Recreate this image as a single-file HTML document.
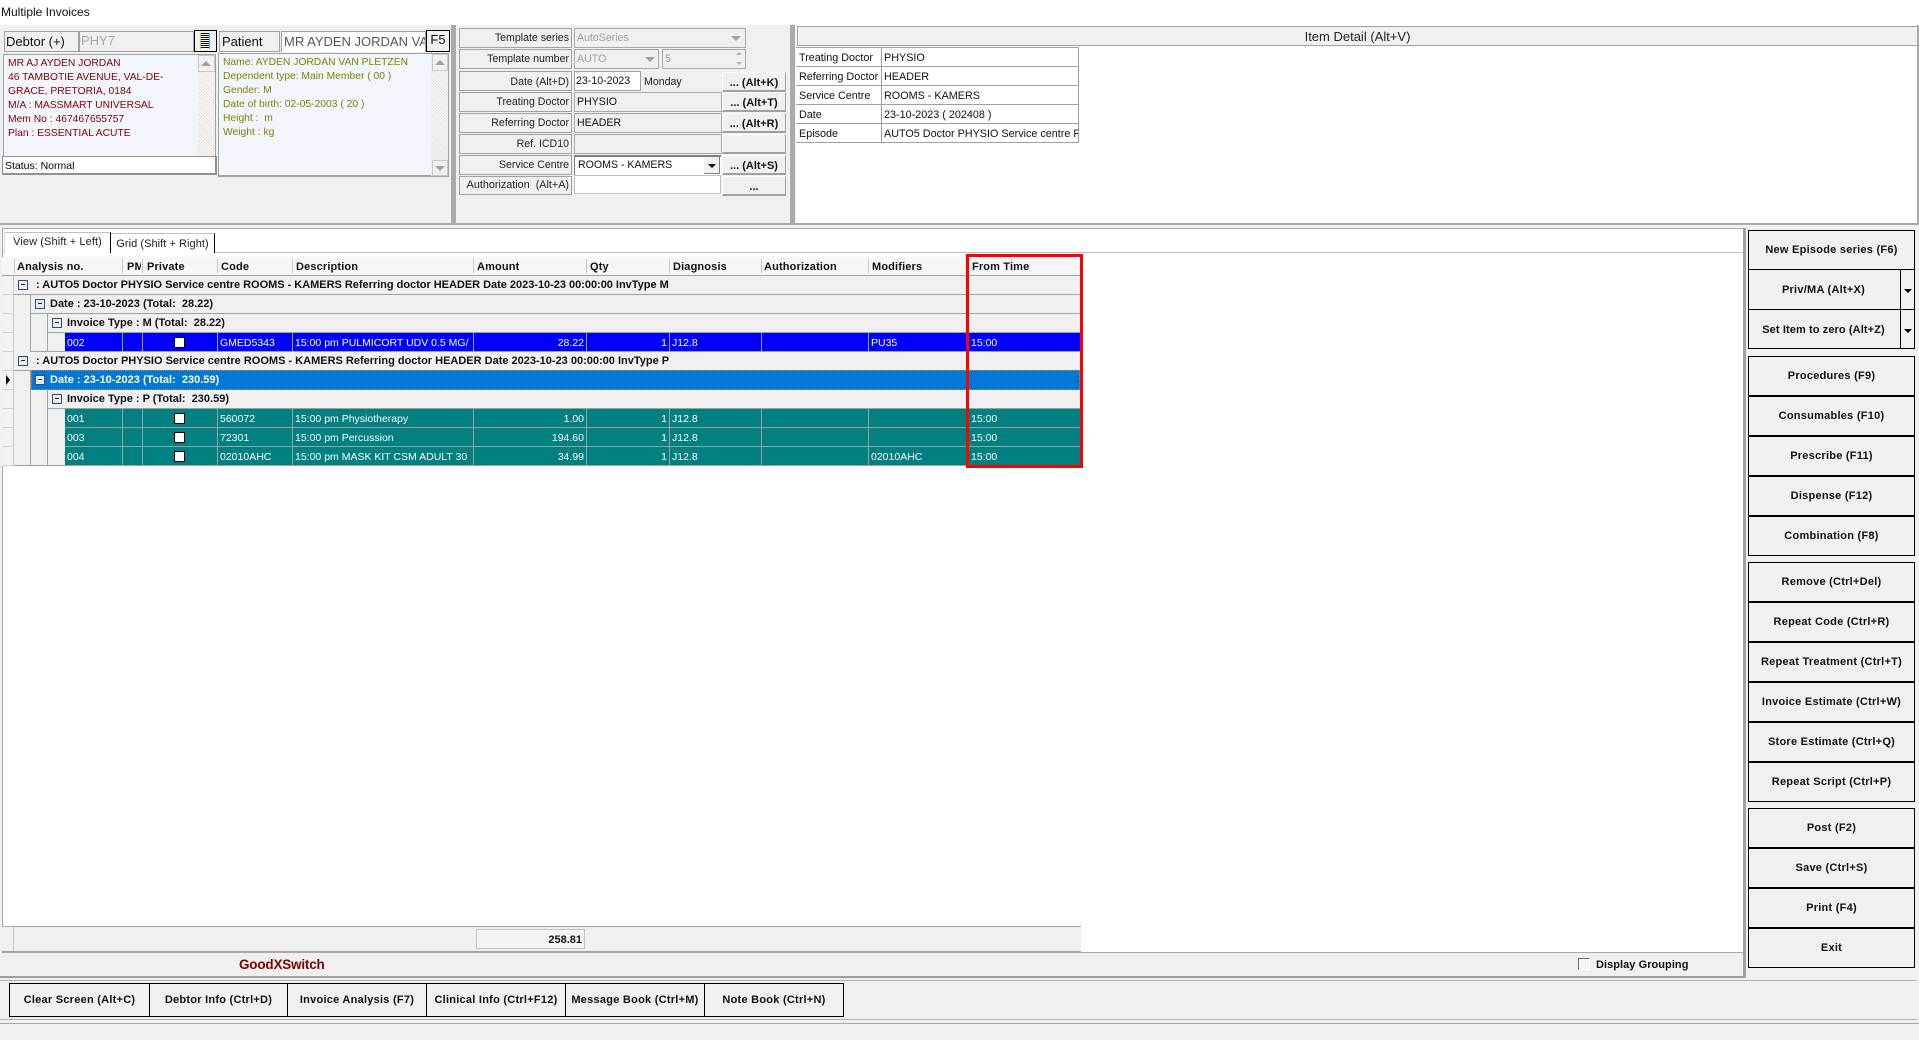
<!DOCTYPE html>
<html><head><meta charset="utf-8"><title>Multiple Invoices</title>
<style>
html,body{margin:0;padding:0;background:#fff}
#p{position:relative;width:1919px;height:1040px;overflow:hidden;background:#fff;font:10.6px "Liberation Sans",Arial,sans-serif;color:#000}
#p div{position:absolute;box-sizing:border-box;white-space:nowrap;overflow:hidden}
.lb{background:#f0f0f0;border:1px solid #a0a0a0;text-align:right;padding-right:2px;line-height:19px;color:#222}
.fd{background:#f0f0f0;border:1px solid #a8a8a8;padding-left:2px;line-height:19px;color:#111}
.dis{color:#a0a0a0}
.bt{background:#f0f0f0;border-top:1px solid #fff;border-left:1px solid #fff;border-right:1px solid #a0a0a0;border-bottom:2px solid #a0a0a0;text-align:center;font-weight:bold;font-size:11px;line-height:20px;color:#111}
.t{line-height:14px;font-size:10.3px}
.c{height:19px;line-height:20px;border-right:1px solid #a0a0a0;border-bottom:1px solid #a0a0a0;color:#fff;padding-left:2px;font-size:10.5px}
.r{text-align:right;padding:0 2px 0 0}
.h{top:257px;height:18px;line-height:20px;font-weight:bold;font-size:11px;letter-spacing:.15px;color:#111}
.hs{top:259px;width:1px;height:14px;background:#c8c8c8}
.g{height:19px;background:#f0f0f0;border-bottom:1px solid #a0a0a0;font-weight:bold;font-size:11px;line-height:19px;color:#111}
.i{left:2px;width:12px;height:19px;background:#f2f2f2;border-bottom:1px solid #d0d0d0;border-right:1px solid #c8c8c8}
.x{width:10px;height:10px;background:#e8edf5;border:1px solid #3b4a68}
.x::after{content:"";position:absolute;left:2px;top:3px;width:4px;height:1px;background:#1b2a48}
.cb{left:174px;width:11px;height:11px;background:#fff;border:1px solid #000}
.b{left:1748px;width:167px;height:40px;background:#f0f0f0;border:1px solid #000;text-align:center;font-weight:bold;font-size:11px;letter-spacing:.25px;line-height:38px;color:#111}
.b2{top:983px;height:34px;background:#f0f0f0;border:1px solid #000;text-align:center;font-weight:bold;font-size:11px;letter-spacing:.25px;line-height:33px;color:#111}
.tri{width:0;height:0;border-left:4px solid transparent;border-right:4px solid transparent;border-top:4px solid #000}
.up{width:0;height:0;border-left:5px solid transparent;border-right:5px solid transparent;border-bottom:5px solid #a0a0a0}
.dn{width:0;height:0;border-left:5px solid transparent;border-right:5px solid transparent;border-top:5px solid #a0a0a0}
.sb{background:#f0f0f0;border:1px solid #c8c8c8}
.trk{background-color:#f4f4f4;background-image:repeating-linear-gradient(45deg,#e4e4e4 0 1px,#fafafa 1px 2px)}
.dt{border-right:1px solid #a0a0a0;border-bottom:1px solid #a0a0a0;line-height:20px;padding-left:2px;background:#fff;color:#111;font-size:10.8px}
</style></head><body><div id="p">
<div style="left:1px;top:5px;font-size:12px;line-height:15px;color:#111">Multiple Invoices</div>

<!-- top panels -->
<div style="left:0;top:25px;width:1919px;height:198px;background:#f0f0f0"></div>
<div style="left:451px;top:25px;width:5px;height:198px;background:#aaa"></div>
<div style="left:790px;top:25px;width:5px;height:198px;background:#aaa"></div>
<div style="left:796px;top:25px;width:1123px;height:198px;background:#fff"></div>
<div style="left:0;top:223px;width:1919px;height:2px;background:#aaa"></div>
<div style="left:1917px;top:25px;width:2px;height:198px;background:#aaa"></div>

<!-- debtor / patient -->
<div style="left:4px;top:31px;width:75px;height:21px;border:1px solid #a0a0a0;background:#f0f0f0;font-size:13px;line-height:20px;padding-left:1px;color:#111">Debtor (+)</div>
<div style="left:79px;top:31px;width:115px;height:21px;border:1px solid #a0a0a0;background:#f0f0f0;font-size:13px;line-height:17px;padding-left:1px;color:#a8a8a8">PHY7</div>
<div style="left:194px;top:30px;width:23px;height:22px;border:1px solid #000;background:#f0f0f0"></div>
<div style="left:200px;top:33px;width:10px;height:16px;background:repeating-linear-gradient(#111 0 1px,#fff 1px 2px);border-left:1px solid #e8b060;border-right:1px solid #60a8e8"></div>
<div style="left:219px;top:31px;width:61px;height:21px;border:1px solid #a0a0a0;background:#f0f0f0;font-size:13px;line-height:20px;padding-left:2px;color:#111">Patient</div>
<div style="left:281px;top:31px;width:145px;height:21px;border:1px solid #a0a0a0;border-bottom:0;background:#fff;font-size:13px;line-height:20px;padding-left:2px;color:#555">MR AYDEN JORDAN VAN</div>
<div style="left:426px;top:30px;width:24px;height:22px;border:1px solid #000;background:#f0f0f0;font-size:13px;line-height:18px;text-align:center;color:#111">F5</div>

<div style="left:3px;top:54px;width:213px;height:103px;background:#f2f6fc;border:1px solid #a0a0a0"></div>
<div class="trk" style="left:198px;top:55px;width:17px;height:101px"></div>
<div class="sb" style="left:198px;top:55px;width:17px;height:17px"></div>
<div class="up" style="left:201px;top:61px"></div>
<div class="t" style="left:8px;top:57px;color:#800000">MR AJ AYDEN JORDAN</div>
<div class="t" style="left:8px;top:71px;color:#800000">46 TAMBOTIE AVENUE, VAL-DE-</div>
<div class="t" style="left:8px;top:85px;color:#800000">GRACE, PRETORIA, 0184</div>
<div class="t" style="left:8px;top:99px;color:#800000">M/A : MASSMART UNIVERSAL</div>
<div class="t" style="left:8px;top:113px;color:#800000">Mem No : 467467655757</div>
<div class="t" style="left:8px;top:127px;color:#800000">Plan : ESSENTIAL ACUTE</div>
<div style="left:2px;top:156px;width:215px;height:19px;background:#fff;border:1px solid #909090;border-width:1px 2px 2px 1px;line-height:19px;font-size:10.5px;padding-left:2px;color:#000">Status: Normal</div>

<div style="left:218px;top:53px;width:231px;height:124px;background:#f2f6fc;border:1px solid #a0a0a0;border-right-width:2px;border-bottom-width:2px"></div>
<div class="trk" style="left:431px;top:54px;width:17px;height:122px"></div>
<div class="sb" style="left:432px;top:54px;width:16px;height:17px"></div>
<div class="up" style="left:435px;top:60px"></div>
<div class="sb" style="left:432px;top:160px;width:16px;height:16px"></div>
<div class="dn" style="left:435px;top:166px"></div>
<div class="t" style="left:223px;top:56px;color:#808000">Name: AYDEN JORDAN VAN PLETZEN</div>
<div class="t" style="left:223px;top:70px;color:#808000">Dependent type: Main Member ( 00 )</div>
<div class="t" style="left:223px;top:84px;color:#808000">Gender: M</div>
<div class="t" style="left:223px;top:98px;color:#808000">Date of birth: 02-05-2003 ( 20 )</div>
<div class="t" style="left:223px;top:112px;color:#808000">Height :&nbsp; m</div>
<div class="t" style="left:223px;top:126px;color:#808000">Weight : kg</div>

<!-- template form -->
<div class="lb" style="left:459px;top:28px;width:113px;height:20px">Template series</div>
<div class="fd dis" style="left:574px;top:28px;width:172px;height:20px;padding-left:2px">AutoSeries</div>
<div class="dn" style="left:731px;top:36px"></div>
<div class="lb" style="left:459px;top:49px;width:113px;height:20px">Template number</div>
<div class="fd dis" style="left:574px;top:49px;width:85px;height:20px">AUTO</div>
<div class="dn" style="left:645px;top:57px"></div>
<div class="fd dis" style="left:662px;top:49px;width:84px;height:20px">5</div>
<div style="left:736px;top:52px;width:0;height:0;border-left:3px solid transparent;border-right:3px solid transparent;border-bottom:3px solid #b0b0b0"></div>
<div style="left:736px;top:62px;width:0;height:0;border-left:3px solid transparent;border-right:3px solid transparent;border-top:3px solid #b0b0b0"></div>
<div class="lb" style="left:459px;top:71px;width:113px;height:20px;line-height:21px">Date (Alt+D)</div>
<div style="left:574px;top:71px;width:67px;height:20px;background:#fff;border:1px solid #a0a0a0;line-height:18px;padding-left:1px;color:#111">23-10-2023</div>
<div style="left:644px;top:71px;line-height:22px;color:#222">Monday</div>
<div class="lb" style="left:459px;top:92px;width:113px;height:20px">Treating Doctor</div>
<div class="fd" style="left:574px;top:92px;width:148px;height:20px;padding-left:2px;line-height:18px">PHYSIO</div>
<div class="lb" style="left:459px;top:113px;width:113px;height:20px">Referring Doctor</div>
<div class="fd" style="left:574px;top:113px;width:148px;height:20px;padding-left:2px;line-height:18px">HEADER</div>
<div class="lb" style="left:459px;top:134px;width:113px;height:20px">Ref. ICD10</div>
<div class="fd" style="left:574px;top:134px;width:148px;height:20px"></div>
<div class="lb" style="left:459px;top:155px;width:113px;height:20px">Service Centre</div>
<div style="left:574px;top:155px;width:147px;height:20px;background:#fff;border-top:2px solid #808080;border-left:1px solid #808080;line-height:17px;padding-left:3px;color:#111">ROOMS - KAMERS</div>
<div style="left:704px;top:157px;width:16px;height:17px;background:#f0f0f0;border-right:1px solid #808080;border-bottom:1px solid #808080"></div>
<div class="tri" style="left:708px;top:164px"></div>
<div class="lb" style="left:459px;top:176px;width:113px;height:19px;line-height:17px;font-size:10.8px">Authorization&nbsp; (Alt+A)</div>
<div style="left:574px;top:175px;width:147px;height:19px;background:#fff;border:1px solid #c0c0c0"></div>

<div class="bt" style="left:722px;top:72px;width:64px;height:20px">... (Alt+K)</div>
<div class="bt" style="left:722px;top:92px;width:64px;height:20px">... (Alt+T)</div>
<div class="bt" style="left:722px;top:113px;width:64px;height:20px">... (Alt+R)</div>
<div class="bt" style="left:722px;top:134px;width:64px;height:20px"></div>
<div class="bt" style="left:722px;top:155px;width:64px;height:20px">... (Alt+S)</div>
<div class="bt" style="left:722px;top:176px;width:64px;height:20px">...</div>

<!-- item detail -->
<div style="left:797px;top:26px;width:1120px;height:20px;background:#f0f0f0;border:1px solid #a0a0a0;border-width:1px 0 1px 1px;text-align:center;font-size:13px;line-height:20px;color:#222">Item Detail (Alt+V)</div>
<div style="left:796px;top:47px;width:283px;height:1px;background:#a0a0a0"></div>
<div class="dt" style="left:796px;top:48px;width:86px;height:19px;padding-left:3px">Treating Doctor</div>
<div class="dt" style="left:882px;top:48px;width:197px;height:19px">PHYSIO</div>
<div class="dt" style="left:796px;top:67px;width:86px;height:19px;padding-left:3px">Referring Doctor</div>
<div class="dt" style="left:882px;top:67px;width:197px;height:19px">HEADER</div>
<div class="dt" style="left:796px;top:86px;width:86px;height:19px;padding-left:3px">Service Centre</div>
<div class="dt" style="left:882px;top:86px;width:197px;height:19px">ROOMS - KAMERS</div>
<div class="dt" style="left:796px;top:105px;width:86px;height:19px;padding-left:3px">Date</div>
<div class="dt" style="left:882px;top:105px;width:197px;height:19px">23-10-2023 ( 202408 )</div>
<div class="dt" style="left:796px;top:124px;width:86px;height:19px;padding-left:3px">Episode</div>
<div class="dt" style="left:882px;top:124px;width:197px;height:19px">AUTO5 Doctor PHYSIO Service centre ROOMS</div>

<!-- main panel -->
<div style="left:0;top:225px;width:1919px;height:815px;background:#f0f0f0"></div>
<div style="left:2px;top:228px;width:1741px;height:724px;background:#fff;border-top:1px solid #a8a8a8;border-left:1px solid #a8a8a8"></div>
<div style="left:1743px;top:228px;width:3px;height:750px;background:#a0a0a0"></div>
<div style="left:3px;top:252px;width:1740px;height:1px;background:#c0c0c0"></div>
<div style="left:4px;top:232px;width:107px;height:21px;background:#fff;border-right:1px solid #000;border-top:1px solid #c0c0c0;border-left:1px solid #e0e0e0;text-align:center;font-size:11px;letter-spacing:.1px;line-height:19px;color:#222">View (Shift + Left)</div>
<div style="left:111px;top:233px;width:104px;height:20px;background:#fff;border-right:1px solid #000;border-top:1px solid #c0c0c0;text-align:center;font-size:11px;letter-spacing:.05px;line-height:21px;color:#222">Grid (Shift + Right)</div>

<!-- grid header -->
<div style="left:2px;top:257px;width:1078px;height:19px;background:#f6f6f6;border-bottom:1px solid #a0a0a0"></div>
<div class="hs" style="left:14px"></div><div class="hs" style="left:122px"></div><div class="hs" style="left:142px"></div><div class="hs" style="left:217px"></div><div class="hs" style="left:292px"></div><div class="hs" style="left:473px"></div><div class="hs" style="left:586px"></div><div class="hs" style="left:669px"></div><div class="hs" style="left:761px"></div><div class="hs" style="left:868px"></div>
<div class="h" style="left:17px">Analysis no.</div>
<div class="h" style="left:127px;width:14px">PM</div>
<div class="h" style="left:147px">Private</div>
<div class="h" style="left:221px">Code</div>
<div class="h" style="left:296px">Description</div>
<div class="h" style="left:477px">Amount</div>
<div class="h" style="left:590px">Qty</div>
<div class="h" style="left:673px">Diagnosis</div>
<div class="h" style="left:764px">Authorization</div>
<div class="h" style="left:872px">Modifiers</div>
<div class="h" style="left:972px">From Time</div>

<!-- indicators -->
<div class="i" style="top:276px"></div><div class="i" style="top:295px"></div><div class="i" style="top:314px"></div><div class="i" style="top:333px"></div><div class="i" style="top:352px"></div><div class="i" style="top:371px"></div><div class="i" style="top:390px"></div><div class="i" style="top:409px"></div><div class="i" style="top:428px"></div><div class="i" style="top:447px"></div>
<div style="left:6px;top:375px;width:0;height:0;border-top:5px solid transparent;border-bottom:5px solid transparent;border-left:4px solid #000"></div>

<!-- group rows -->
<div class="g" style="left:14px;top:276px;width:1066px;padding-left:22px;letter-spacing:-.02px">: AUTO5 Doctor PHYSIO Service centre ROOMS - KAMERS Referring doctor HEADER Date 2023-10-23 00:00:00 InvType M</div>
<div class="x" style="left:18px;top:280px"></div>
<div style="left:14px;top:295px;width:17px;height:57px;background:#f0f0f0;border-right:1px solid #a0a0a0"></div>
<div class="g" style="left:31px;top:295px;width:1049px;padding-left:19px">Date : 23-10-2023 (Total:&nbsp; 28.22)</div>
<div class="x" style="left:35px;top:299px"></div>
<div style="left:31px;top:314px;width:17px;height:38px;background:#f0f0f0;border-right:1px solid #a0a0a0;border-bottom:1px solid #a0a0a0"></div>
<div class="g" style="left:48px;top:314px;width:1032px;padding-left:19px">Invoice Type : M (Total:&nbsp; 28.22)</div>
<div class="x" style="left:52px;top:318px"></div>
<div style="left:48px;top:333px;width:17px;height:19px;background:#f0f0f0;border-bottom:1px solid #a0a0a0"></div>

<div class="c" style="left:65px;top:333px;width:58px;background:#00f">002</div>
<div class="c" style="left:123px;top:333px;width:20px;background:#00f"></div>
<div class="c" style="left:143px;top:333px;width:75px;background:#00f"></div>
<div class="cb" style="top:337px"></div>
<div class="c" style="left:218px;top:333px;width:75px;background:#00f">GMED5343</div>
<div class="c" style="left:293px;top:333px;width:181px;background:#00f">15:00 pm PULMICORT UDV 0.5 MG/</div>
<div class="c r" style="left:474px;top:333px;width:113px;background:#00f">28.22</div>
<div class="c r" style="left:587px;top:333px;width:83px;background:#00f">1</div>
<div class="c" style="left:670px;top:333px;width:92px;background:#00f">J12.8</div>
<div class="c" style="left:762px;top:333px;width:107px;background:#00f"></div>
<div class="c" style="left:869px;top:333px;width:99px;background:#00f">PU35</div>
<div class="c" style="left:968px;top:333px;width:112px;background:#00f;border-right:0;padding-left:3px">15:00</div>

<div class="g" style="left:14px;top:352px;width:1066px;padding-left:22px">: AUTO5 Doctor PHYSIO Service centre ROOMS - KAMERS Referring doctor HEADER Date 2023-10-23 00:00:00 InvType P</div>
<div class="x" style="left:18px;top:356px"></div>
<div style="left:14px;top:371px;width:17px;height:95px;background:#f0f0f0;border-right:1px solid #a0a0a0;border-bottom:1px solid #a0a0a0"></div>
<div style="left:31px;top:370px;width:1049px;height:20px;background:#0078d7;border:1px dotted #c08040;color:#fff;font-weight:bold;font-size:11px;line-height:19px;padding-left:18px">Date : 23-10-2023 (Total:&nbsp; 230.59)</div>
<div class="x" style="left:35px;top:375px"></div>
<div style="left:31px;top:390px;width:17px;height:76px;background:#f0f0f0;border-right:1px solid #a0a0a0;border-bottom:1px solid #a0a0a0"></div>
<div class="g" style="left:48px;top:390px;width:1032px;padding-left:19px">Invoice Type : P (Total:&nbsp; 230.59)</div>
<div class="x" style="left:52px;top:394px"></div>
<div style="left:48px;top:409px;width:17px;height:57px;background:#f0f0f0;border-bottom:1px solid #a0a0a0"></div>

<div class="c" style="left:65px;top:409px;width:58px;background:#008080">001</div>
<div class="c" style="left:123px;top:409px;width:20px;background:#008080"></div>
<div class="c" style="left:143px;top:409px;width:75px;background:#008080"></div>
<div class="cb" style="top:413px"></div>
<div class="c" style="left:218px;top:409px;width:75px;background:#008080">560072</div>
<div class="c" style="left:293px;top:409px;width:181px;background:#008080">15:00 pm Physiotherapy</div>
<div class="c r" style="left:474px;top:409px;width:113px;background:#008080">1.00</div>
<div class="c r" style="left:587px;top:409px;width:83px;background:#008080">1</div>
<div class="c" style="left:670px;top:409px;width:92px;background:#008080">J12.8</div>
<div class="c" style="left:762px;top:409px;width:107px;background:#008080"></div>
<div class="c" style="left:869px;top:409px;width:99px;background:#008080"></div>
<div class="c" style="left:968px;top:409px;width:112px;background:#008080;border-right:0;padding-left:3px">15:00</div>

<div class="c" style="left:65px;top:428px;width:58px;background:#008080">003</div>
<div class="c" style="left:123px;top:428px;width:20px;background:#008080"></div>
<div class="c" style="left:143px;top:428px;width:75px;background:#008080"></div>
<div class="cb" style="top:432px"></div>
<div class="c" style="left:218px;top:428px;width:75px;background:#008080">72301</div>
<div class="c" style="left:293px;top:428px;width:181px;background:#008080">15:00 pm Percussion</div>
<div class="c r" style="left:474px;top:428px;width:113px;background:#008080">194.60</div>
<div class="c r" style="left:587px;top:428px;width:83px;background:#008080">1</div>
<div class="c" style="left:670px;top:428px;width:92px;background:#008080">J12.8</div>
<div class="c" style="left:762px;top:428px;width:107px;background:#008080"></div>
<div class="c" style="left:869px;top:428px;width:99px;background:#008080"></div>
<div class="c" style="left:968px;top:428px;width:112px;background:#008080;border-right:0;padding-left:3px">15:00</div>

<div class="c" style="left:65px;top:447px;width:58px;background:#008080">004</div>
<div class="c" style="left:123px;top:447px;width:20px;background:#008080"></div>
<div class="c" style="left:143px;top:447px;width:75px;background:#008080"></div>
<div class="cb" style="top:451px"></div>
<div class="c" style="left:218px;top:447px;width:75px;background:#008080">02010AHC</div>
<div class="c" style="left:293px;top:447px;width:181px;background:#008080">15:00 pm MASK KIT CSM ADULT 30</div>
<div class="c r" style="left:474px;top:447px;width:113px;background:#008080">34.99</div>
<div class="c r" style="left:587px;top:447px;width:83px;background:#008080">1</div>
<div class="c" style="left:670px;top:447px;width:92px;background:#008080">J12.8</div>
<div class="c" style="left:762px;top:447px;width:107px;background:#008080"></div>
<div class="c" style="left:869px;top:447px;width:99px;background:#008080">02010AHC</div>
<div class="c" style="left:968px;top:447px;width:112px;background:#008080;border-right:0;padding-left:3px">15:00</div>

<!-- red highlight -->
<div style="left:966px;top:254px;width:117px;height:214px;border:3px solid #f00"></div>

<!-- totals -->
<div style="left:2px;top:926px;width:1079px;height:26px;background:#f0f0f0;border-top:1px solid #a8a8a8;border-bottom:1px solid #a0a0a0"></div>
<div style="left:13px;top:927px;width:1px;height:24px;background:#c8c8c8"></div>
<div style="left:476px;top:929px;width:109px;height:20px;background:#f4f4f4;border:1px solid #c4c4c4;text-align:right;padding-right:2px;font-weight:bold;font-size:11px;line-height:20px;color:#111">258.81</div>

<!-- footer of main -->
<div style="left:2px;top:952px;width:1741px;height:24px;background:#f0f0f0;border-top:1px solid #a8a8a8"></div>
<div style="left:0;top:976px;width:1746px;height:2px;background:#a0a0a0"></div>
<div style="left:239px;top:957px;font-size:13.5px;line-height:16px;font-weight:bold;color:#800000;letter-spacing:-.2px">GoodXSwitch</div>
<div style="left:1578px;top:958px;width:12px;height:12px;background:#f4f4f4;border:1px solid #707070;border-right-color:#fff;border-bottom-color:#fff"></div>
<div style="left:1596px;top:957px;line-height:17px;font-weight:bold;font-size:11px;letter-spacing:.05px;color:#111">Display Grouping</div>

<!-- right buttons -->
<div class="b" style="top:230px">New Episode series (F6)</div>
<div class="b" style="top:269px;padding-right:16px;height:41px;line-height:40px">Priv/MA (Alt+X)</div>
<div style="left:1900px;top:270px;width:1px;height:40px;background:#000"></div>
<div class="tri" style="left:1904px;top:289px"></div>
<div class="b" style="top:309px;padding-right:16px;line-height:40px;letter-spacing:.1px">Set Item to zero (Alt+Z)</div>
<div style="left:1900px;top:310px;width:1px;height:39px;background:#000"></div>
<div class="tri" style="left:1904px;top:329px"></div>

<div class="b" style="top:356px">Procedures (F9)</div>
<div class="b" style="top:396px">Consumables (F10)</div>
<div class="b" style="top:436px">Prescribe (F11)</div>
<div class="b" style="top:476px">Dispense (F12)</div>
<div class="b" style="top:516px">Combination (F8)</div>

<div class="b" style="top:562px">Remove (Ctrl+Del)</div>
<div class="b" style="top:602px">Repeat Code (Ctrl+R)</div>
<div class="b" style="top:642px">Repeat Treatment (Ctrl+T)</div>
<div class="b" style="top:682px">Invoice Estimate (Ctrl+W)</div>
<div class="b" style="top:722px">Store Estimate (Ctrl+Q)</div>
<div class="b" style="top:762px">Repeat Script (Ctrl+P)</div>

<div class="b" style="top:808px">Post (F2)</div>
<div class="b" style="top:848px">Save (Ctrl+S)</div>
<div class="b" style="top:888px">Print (F4)</div>
<div class="b" style="top:928px">Exit</div>

<!-- bottom bar -->
<div style="left:0;top:980px;width:1917px;height:1px;background:#b0b0b0"></div>
<div style="left:0;top:1019px;width:1917px;height:1px;background:#b0b0b0"></div>
<div style="left:0;top:1023px;width:1919px;height:1px;background:#a8a8a8"></div>
<div class="b2" style="left:9px;width:141px">Clear Screen (Alt+C)</div>
<div class="b2" style="left:149px;width:139px">Debtor Info (Ctrl+D)</div>
<div class="b2" style="left:287px;width:140px">Invoice Analysis (F7)</div>
<div class="b2" style="left:426px;width:140px">Clinical Info (Ctrl+F12)</div>
<div class="b2" style="left:565px;width:140px">Message Book (Ctrl+M)</div>
<div class="b2" style="left:704px;width:140px">Note Book (Ctrl+N)</div>
</div></body></html>
